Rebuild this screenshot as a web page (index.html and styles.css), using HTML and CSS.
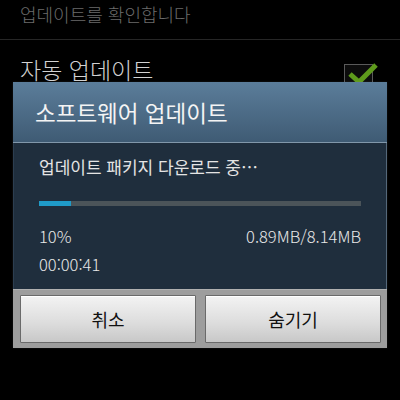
FILE: index.html
```html
<!DOCTYPE html>
<html lang="ko">
<head>
<meta charset="utf-8">
<link rel="stylesheet" href="styles.css">
</head>
<body>
<div class="screen">
  <div class="item item-sub">
    <span class="sub-text">업데이트를 확인합니다</span>
  </div>
  <div class="item item-auto">
    <span class="auto-text">자동 업데이트</span>
    <span class="checkbox">
      <svg width="34" height="30" viewBox="0 0 34 30"><path d="M5 11 L14 19 L31 2" fill="none" stroke="#5e9a1c" stroke-width="5" stroke-linejoin="miter"/></svg>
    </span>
  </div>

  <div class="dialog">
    <div class="dialog-title">소프트웨어 업데이트</div>
    <div class="dialog-body">
      <div class="message">업데이트 패키지 다운로드 중…</div>
      <div class="progress"><div class="progress-fill" style="width:10%"></div></div>
      <div class="stats">
        <span>10%</span>
        <span>0.89MB/8.14MB</span>
      </div>
      <div class="time">00:00:41</div>
    </div>
    <div class="dialog-buttons">
      <button class="btn">취소</button>
      <button class="btn">숨기기</button>
    </div>
  </div>
</div>
</body>
</html>
```
FILE: styles.css
```css
html, body {
  margin: 0;
  padding: 0;
  background: #000;
}
body {
  font-family: "Noto Sans CJK KR", "Noto Sans", sans-serif;
  width: 400px;
  height: 400px;
  overflow: hidden;
}
.screen {
  position: relative;
  width: 400px;
  height: 400px;
  background: #000;
}
.item {
  display: flex;
  align-items: center;
  padding: 0 20px;
}
.item-sub {
  height: 39px;
  border-bottom: 1px solid #262626;
  align-items: flex-start;
}
.sub-text {
  color: #6c6c6c;
  font-size: 18px;
  font-weight: 300;
  line-height: 18px;
  margin-top: 5px;
}
.item-auto {
  justify-content: space-between;
  padding-top: 14px;
  align-items: flex-start;
}
.auto-text {
  color: #d2d2d2;
  font-size: 23px;
  font-weight: 300;
  line-height: 30px;
}
.checkbox {
  position: relative;
  width: 27px;
  height: 27px;
  margin-top: 10px;
  margin-right: 7px;
  border: 1px solid #5a5a5a;
  background: #0c0c0c;
}
.checkbox svg {
  position: absolute;
  left: 0px;
  top: -2px;
}
.dialog {
  position: absolute;
  left: 13px;
  top: 82px;
  width: 374px;
  height: 266px;
  display: flex;
  flex-direction: column;
  box-shadow: 0 0 2px rgba(255,255,255,0.1);
}
.dialog-title {
  height: 61px;
  box-sizing: border-box;
  padding-left: 22px;
  display: flex;
  align-items: center;
  color: #f4f4f4;
  font-size: 22.5px;
  font-weight: 400;
  background: linear-gradient(#5b7d9a, #3f5b74);
  border-bottom: 1px solid #8197aa;
}
.dialog-body {
  flex: 1;
  background: #1f2e3d;
  border-right: 1px solid #55687a;
  border-left: 1px solid #2c3e50;
  padding: 12px 25px 0 25px;
  color: #e4e4e4;
}
.message {
  font-size: 17px;
  line-height: 24px;
  font-weight: 400;
}
.progress {
  margin-top: 22px;
  height: 5px;
  background: #4b5459;
}
.progress-fill {
  height: 100%;
  background: #1f9bc9;
}
.stats {
  margin-top: 19px;
  display: flex;
  justify-content: space-between;
  font-size: 16.5px;
  line-height: 22px;
  font-weight: 300;
  color: #e8e8e8;
}
.time {
  margin-top: 6px;
  font-size: 16.5px;
  line-height: 22px;
  font-weight: 300;
  color: #e8e8e8;
}
.dialog-buttons {
  height: 59px;
  box-sizing: border-box;
  background: #9d9d9d;
  padding: 5px 6px 6px 7px;
  display: flex;
  gap: 9px;
  border-top: 1px solid #b0b0b0;
}
.btn {
  flex: 1;
  height: 48px;
  border: 1px solid #6a6a6a;
  border-radius: 1px;
  background: linear-gradient(#f3f3f3, #dcdcdc 60%, #c8c8c8);
  box-shadow: inset 0 1px 0 #ffffff;
  font-family: "Noto Sans CJK KR", "Noto Sans", sans-serif;
  font-size: 18px;
  color: #111;
  padding: 0;
}
```
